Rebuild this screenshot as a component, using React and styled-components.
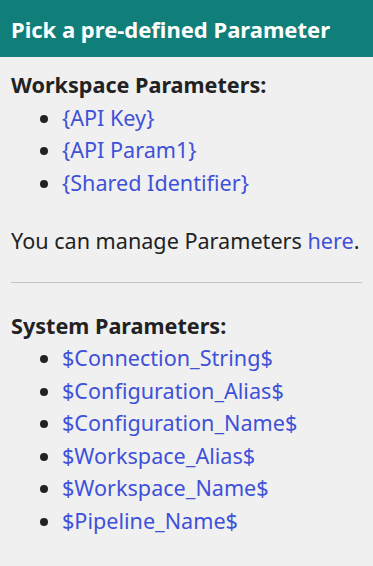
import React from "react";
import styled, { createGlobalStyle } from "styled-components";

const GlobalStyle = createGlobalStyle`
  html, body {
    margin: 0;
    padding: 0;
    background: #f0f0f0;
  }
  body {
    font-family: "Noto Sans", "Open Sans", sans-serif;
    color: #222;
  }
`;

const workspaceParams = ["{API Key}", "{API Param1}", "{Shared Identifier}"];

const systemParams = [
  "$Connection_String$",
  "$Configuration_Alias$",
  "$Configuration_Name$",
  "$Workspace_Alias$",
  "$Workspace_Name$",
  "$Pipeline_Name$",
];

export default function App() {
  return (
    <>
      <GlobalStyle />
      <Panel>
        <Header>Pick a pre-defined Parameter</Header>
        <Body>
          <SectionTitle>Workspace Parameters:</SectionTitle>
          <ParamList>
            {workspaceParams.map((p) => (
              <li key={p}>
                <Link href="#">{p}</Link>
              </li>
            ))}
          </ParamList>
          <Note>
            You can manage Parameters <Link href="#">here</Link>.
          </Note>
          <Divider />
          <SectionTitle>System Parameters:</SectionTitle>
          <ParamList>
            {systemParams.map((p) => (
              <li key={p}>
                <Link href="#">{p}</Link>
              </li>
            ))}
          </ParamList>
        </Body>
      </Panel>
    </>
  );
}

const Panel = styled.div`
  width: 373px;
  min-height: 566px;
  background: #f0f0f0;
`;

const Header = styled.div`
  height: 57px;
  display: flex;
  align-items: center;
  padding: 0 11px;
  box-sizing: border-box;
  background: #117f79;
  color: #fff;
  font-size: 22px;
  font-weight: 700;
`;

const Body = styled.div`
  padding: 12px 11px;
  font-size: 21.6px;
  line-height: 32.5px;
`;

const SectionTitle = styled.div`
  font-weight: 700;
  color: #222;
`;

const ParamList = styled.ul`
  margin: 0;
  padding-left: 51px;
  list-style: disc;
`;

const Link = styled.a`
  color: #3f51d8;
  text-decoration: none;
`;

const Note = styled.p`
  margin: 26px 0 0;
`;

const Divider = styled.hr`
  margin: 24px 0 27px;
  border: none;
  border-top: 1px solid #c4c4c4;
`;
